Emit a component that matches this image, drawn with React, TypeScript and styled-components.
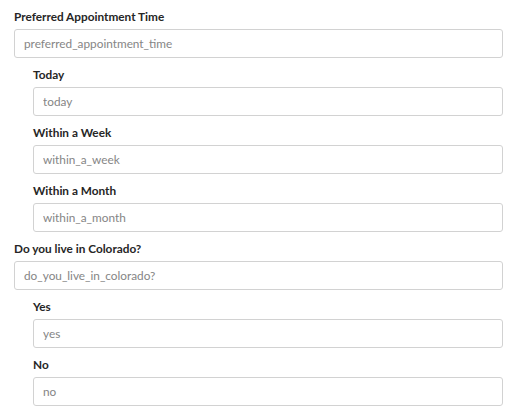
import styled, { createGlobalStyle } from "styled-components";

interface FieldNode {
  label: string;
  name: string;
  children?: FieldNode[];
}

const fields: FieldNode[] = [
  {
    label: "Preferred Appointment Time",
    name: "preferred_appointment_time",
    children: [
      { label: "Today", name: "today" },
      { label: "Within a Week", name: "within_a_week" },
      { label: "Within a Month", name: "within_a_month" },
    ],
  },
  {
    label: "Do you live in Colorado?",
    name: "do_you_live_in_colorado?",
    children: [
      { label: "Yes", name: "yes" },
      { label: "No", name: "no" },
    ],
  },
];

const Field = ({ field }: { field: FieldNode }) => (
  <>
    <FieldBlock>
      <Label>{field.label}</Label>
      <Input placeholder={field.name} readOnly />
    </FieldBlock>
    {field.children && (
      <Nested>
        {field.children.map((child) => (
          <Field key={child.name} field={child} />
        ))}
      </Nested>
    )}
  </>
);

const App = () => (
  <>
    <GlobalStyle />
    <Form>
      {fields.map((f) => (
        <Field key={f.name} field={f} />
      ))}
    </Form>
  </>
);

const GlobalStyle = createGlobalStyle`
  body {
    margin: 0;
    background: #fff;
    font-family: Lato, "Liberation Sans", sans-serif;
  }
`;

const Form = styled.div`
  display: flex;
  flex-direction: column;
  gap: 8px;
  padding: 8px 11px 0 14px;
`;

const Nested = styled.div`
  display: flex;
  flex-direction: column;
  gap: 8px;
  padding-left: 19px;
`;

const FieldBlock = styled.div`
  display: flex;
  flex-direction: column;
  gap: 4px;
`;

const Label = styled.label`
  font-size: 11.8px;
  font-weight: 700;
  line-height: 17px;
  color: #262626;
`;

const Input = styled.input`
  box-sizing: border-box;
  height: 29px;
  width: 100%;
  padding: 0 9px;
  border: 1px solid #d2d2d2;
  border-radius: 3px;
  font-family: inherit;
  font-size: 11.8px;
  color: #333;
  outline: none;

  &::placeholder {
    color: #858585;
  }
`;

export default App;
